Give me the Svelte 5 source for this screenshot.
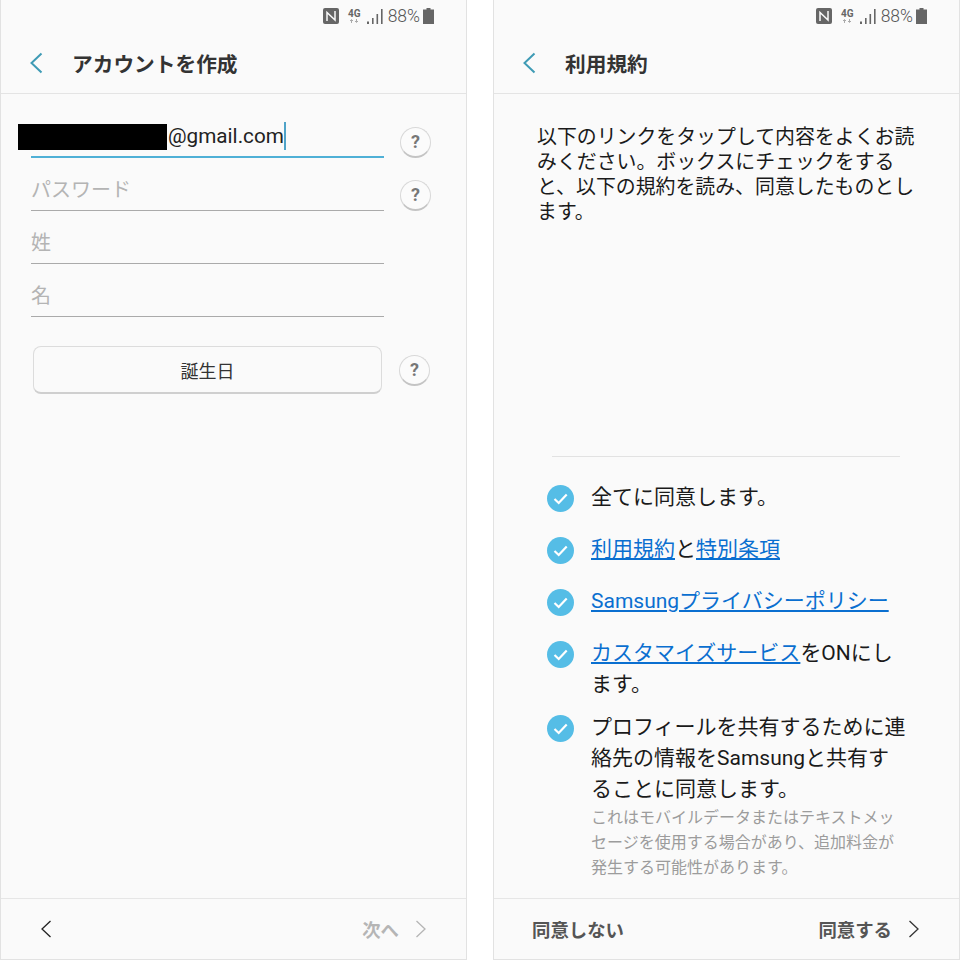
<script lang="ts">
  const fields = [
    { label: 'パスワード', help: true },
    { label: '姓', help: false },
    { label: '名', help: false }
  ];

  const agreements = [
    { parts: [{ text: '全てに同意します。' }] },
    { parts: [{ text: '利用規約', link: true }, { text: 'と' }, { text: '特別条項', link: true }] },
    { parts: [{ text: 'Samsungプライバシーポリシー', link: true }] },
    { parts: [{ text: 'カスタマイズサービス', link: true }, { text: 'をONにします。' }] },
    {
      parts: [{ text: 'プロフィールを共有するために連絡先の情報をSamsungと共有することに同意します。' }],
      note: 'これはモバイルデータまたはテキストメッセージを使用する場合があり、追加料金が発生する可能性があります。'
    }
  ];
</script>

{#snippet status()}
  <div class="status">
    <svg class="nfc" viewBox="0 0 16 16" width="16" height="16">
      <rect width="16" height="16" rx="2" fill="#666" />
      <path d="M4 13V4.500l8 7.500V3" fill="none" stroke="#fafafa" stroke-width="1.500" />
    </svg>
    <span class="net">4G<svg viewBox="0 0 10 4" width="10" height="4"><path d="M2.500 4V1M1 2l1.500-1.500L4 2M7.500 0v3M6 2l1.500 1.500L9 2" fill="none" stroke="#aaa" /></svg></span>
    <svg class="signal" viewBox="0 0 16 15" width="16" height="15">
      <path d="M0 12.500h2V15H0zM5 9h1.600v6H5zM9.500 5h1.600v10H9.500zM14 0h1.600v15H14z" fill="#666" />
    </svg>
    <span class="pct">88%</span>
    <svg class="battery" viewBox="0 0 11 16" width="11" height="16">
      <path d="M3.500 0h4v1.500H11V16H0V1.500h3.500z" fill="#666" />
    </svg>
  </div>
{/snippet}

{#snippet help()}
  <button class="help">?</button>
{/snippet}

{#snippet chevron(dir, color)}
  <svg class="chevron" viewBox="0 0 10 18" width="10" height="18">
    <path d={dir === 'left' ? 'M9.500 1L1 9l8.500 8' : 'M.5 1L9 9 .5 17'} fill="none" stroke={color} stroke-width="1.300" />
  </svg>
{/snippet}

{#snippet head(title)}
  <header class="head">
    <svg viewBox="0 0 14 22" width="14" height="22">
      <path d="M12.500 1.500L2.500 11l10 9.500" fill="none" stroke="#3f9bb5" stroke-width="2" />
    </svg>
    <h1>{title}</h1>
  </header>
{/snippet}

<main class="page">
  <section class="phone">
    {@render status()}
    {@render head('アカウントを作成')}
    <div class="form">
      <div class="row">
        <div class="field active">
          <span class="redact"></span>
          <span class="value">@gmail.com</span><span class="caret"></span>
        </div>
        {@render help()}
      </div>
      {#each fields as f}
        <div class="row">
          <div class="field"><span class="placeholder">{f.label}</span></div>
          {#if f.help}{@render help()}{/if}
        </div>
      {/each}
      <div class="row birth">
        <button class="date">誕生日</button>
        {@render help()}
      </div>
    </div>
    <footer class="foot">
      {@render chevron('left', '#222')}
      <span class="next off">次へ</span>
      {@render chevron('right', '#b5b5b5')}
    </footer>
  </section>

  <section class="phone">
    {@render status()}
    {@render head('利用規約')}
    <div class="terms">
      <p class="intro">以下のリンクをタップして内容をよくお読みください。ボックスにチェックをすると、以下の規約を読み、同意したものとします。</p>
      <ul class="list">
        {#each agreements as a}
          <li>
            <svg class="check" viewBox="0 0 27 27" width="27" height="27">
              <circle cx="13.500" cy="13.500" r="13.500" fill="#55bde6" />
              <path d="M7.500 14l4.200 4 8-8.500" fill="none" stroke="#fff" stroke-width="2.200" />
            </svg>
            <div class="copy">
              <div class="label">
                {#each a.parts as p}{#if p.link}<a href="#top">{p.text}</a>{:else}{p.text}{/if}{/each}
              </div>
              {#if a.note}<div class="note">{a.note}</div>{/if}
            </div>
          </li>
        {/each}
      </ul>
    </div>
    <footer class="foot">
      <span class="next">同意しない</span>
      <span class="next right">同意する</span>
      {@render chevron('right', '#333')}
    </footer>
  </section>
</main>

<style>
  :global(body) {
    background: #fff;
    font-family: Roboto, "Noto Sans CJK JP", sans-serif;
  }

  .page {
    display: flex;
    justify-content: space-between;
    height: 960px;
  }

  .phone {
    width: 467px;
    box-sizing: border-box;
    display: flex;
    flex-direction: column;
    background: #fafafa;
    border: solid #e2e2e2;
    border-width: 0 1px 1px;
  }

  .status {
    height: 32px;
    margin-bottom: 1px;
    flex: none;
    display: flex;
    align-items: center;
    justify-content: flex-end;
    padding-right: 32px;
    color: #666;
  }

  .nfc { margin-right: 9px; }

  .net {
    display: flex;
    flex-direction: column;
    align-items: center;
    font-size: 10px;
    font-weight: 700;
    line-height: 10px;
    margin-right: 6px;
  }

  .signal { margin-right: 5px; }

  .pct {
    font-size: 17.500px;
    font-weight: 300;
    margin-right: 3px;
    color: #555;
  }

  .head {
    height: 61px;
    flex: none;
    box-sizing: border-box;
    display: flex;
    align-items: center;
    padding-left: 28px;
    border-bottom: 1px solid #e4e4e4;
  }

  .head h1 {
    margin: 0 0 0 29px;
    font-size: 20.700px;
    font-weight: 700;
    color: #333;
  }

  .form {
    flex: 1;
    padding: 11px 0 0 30px;
  }

  .row {
    display: flex;
    align-items: flex-start;
    height: 53px;
  }

  .field {
    position: relative;
    width: 353px;
    height: 53px;
    box-sizing: border-box;
    border-bottom: 1px solid #aaa;
    display: flex;
    align-items: center;
    padding-top: 8px;
    font-size: 20px;
  }

  .field.active {
    border-bottom: 2px solid #4fb0d6;
    padding-left: 137px;
    padding-top: 10px;
  }

  .redact {
    position: absolute;
    left: -13px;
    top: 19px;
    width: 149px;
    height: 26px;
    background: #000;
  }

  .value {
    color: #222;
    font-size: 20.700px;
  }

  .caret {
    width: 2px;
    height: 28px;
    background: #4fa3c8;
  }

  .placeholder {
    color: #b4b4b4;
  }

  .help {
    width: 31px;
    height: 31px;
    margin: 21.500px 0 0 16px;
    padding: 0;
    flex: none;
    border-radius: 50%;
    border: 1px solid #d8d8d8;
    border-bottom: 2px solid #c4c4c4;
    background: #fbfbfb;
    color: #777;
    font: 700 18px Roboto, sans-serif;
  }

  .birth {
    margin-top: 29px;
    height: 48px;
  }

  .date {
    width: 349px;
    height: 48px;
    margin-left: 2px;
    border: 1px solid #dcdcdc;
    border-bottom: 2px solid #cfcfcf;
    border-radius: 8px;
    background: #fafafa;
    color: #333;
    font: 400 18px Roboto, "Noto Sans CJK JP", sans-serif;
  }

  .birth .help {
    margin: 8.500px 0 0 17px;
  }

  .foot {
    height: 61px;
    flex: none;
    box-sizing: border-box;
    display: flex;
    align-items: center;
    padding: 0 40px 0 38px;
    border-top: 1px solid #e6e6e6;
  }

  .foot .chevron:first-child {
    margin-left: 2px;
    margin-right: auto;
  }

  .next {
    font-size: 18.400px;
    font-weight: 700;
    color: #555;
  }

  .next.off {
    color: #b5b5b5;
    margin-right: 17px;
  }

  .next.right {
    margin-left: auto;
    margin-right: 17px;
  }

  .terms {
    flex: 1;
    display: flex;
    flex-direction: column;
    justify-content: space-between;
    min-height: 0;
    padding: 31px 36px 0 43px;
  }

  .intro {
    margin: 0;
    font-size: 19.900px;
    line-height: 25px;
    color: #1a1a1a;
  }

  .list {
    list-style: none;
    width: 348px;
    margin: 0 0 0 15px;
    padding: 25px 0 0;
    border-top: 1px solid #e2e2e2;
  }

  .list li {
    display: flex;
    gap: 17px;
    box-sizing: border-box;
    min-height: 52px;
    padding-bottom: 12px;
    margin-left: -5px;
    width: 360px;
  }

  .list li:last-child {
    padding-bottom: 18px;
  }

  .check {
    flex: none;
    margin-top: 3px;
  }

  .copy {
    width: 316px;
  }

  .label {
    font-size: 21px;
    line-height: 31px;
    color: #1a1a1a;
  }

  .label a {
    color: #0a6fd0;
  }

  .note {
    font-size: 16px;
    line-height: 25px;
    color: #9c9c9c;
  }
</style>
